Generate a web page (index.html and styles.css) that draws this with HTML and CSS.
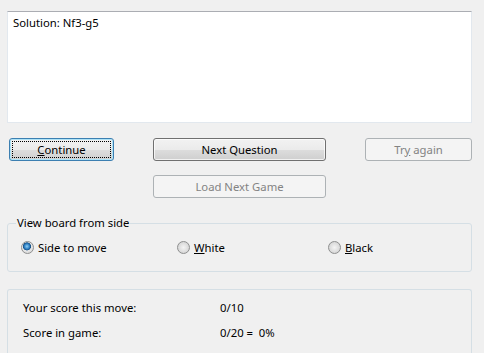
FILE: index.html
```html
<!DOCTYPE html>
<html>
<head>
    <link rel="stylesheet" href="styles.css">
</head>
<body>
    <div class="solution-box">Solution: Nf3-g5</div>

    <div class="buttons">
        <button class="btn default"><span class="focus"><u>C</u>ontinue</span></button>
        <button class="btn">Next Question</button>
        <button class="btn" disabled>Tr<u>y</u> again</button>
        <button class="btn load" disabled>Load Next Game</button>
    </div>

    <fieldset class="side-group">
        <legend>View board from side</legend>
        <div class="radios">
            <label class="radio"><input type="radio" name="side" checked> Side to move</label>
            <label class="radio"><input type="radio" name="side"> <span><u>W</u>hite</span></label>
            <label class="radio"><input type="radio" name="side"> <span><u>B</u>lack</span></label>
        </div>
    </fieldset>

    <div class="score-box">
        <div class="score-row">
            <span class="score-label">Your score this move:</span>
            <span>0/10</span>
        </div>
        <div class="score-row">
            <span class="score-label">Score in game:</span>
            <span>0/20 =&nbsp; 0%</span>
        </div>
    </div>
</body>
</html>
```

FILE: styles.css
```css
body {
    margin: 0;
    padding: 11px 12px 0 7px;
    background-color: #f0f0f0;
    font-family: 'Noto Sans', 'DejaVu Sans', sans-serif;
    font-size: 11.3px;
    color: #000;
    height: 353px;
    box-sizing: border-box;
    overflow: hidden;
}
.solution-box {
    height: 112px;
    box-sizing: border-box;
    background-color: #fff;
    border: 1px solid #e2e8ee;
    border-top-color: #abadb3;
    padding: 3px 5px;
    line-height: 16px;
}

/* Button grid */
.buttons {
    display: grid;
    grid-template-columns: 105px 172px 106px;
    grid-template-rows: 23px 23px;
    column-gap: 40px;
    row-gap: 14px;
    margin: 15px 0 0 2px;
}
.btn {
    font-family: inherit;
    font-size: 11.3px;
    color: #000;
    padding: 0;
    border: 1px solid #707070;
    border-radius: 3px;
    background: linear-gradient(#f2f2f2 0%, #ebebeb 50%, #dddddd 51%, #cfcfcf 100%);
    box-shadow: inset 0 0 0 1px rgba(255, 255, 255, 0.7);
}
.btn:nth-child(2) {
    margin-left: -1px;
    width: 173px;
}
.btn.default {
    border-color: #3c7fb1;
    box-shadow: inset 0 0 0 1px #aee3f7;
    padding: 2px;
}
.btn .focus {
    display: flex;
    align-items: center;
    justify-content: center;
    height: 100%;
    border: 1px dotted #000;
    box-sizing: border-box;
}
.btn:disabled {
    border-color: #adb2b5;
    background: #f4f4f4;
    color: #838383;
    box-shadow: none;
}
.btn:nth-child(3) {
    margin-left: -1px;
}
.btn.load {
    grid-column: 2;
    margin-left: -1px;
    width: 173px;
}

/* View board group */
.side-group {
    margin: 18px 0 0 0;
    padding: 0 0 0 13px;
    height: 56px;
    box-sizing: border-box;
    border: 1px solid #d5dfe5;
    border-radius: 3px;
}
.side-group legend {
    padding: 0 1px;
    margin-left: -5px;
    line-height: 14px;
}
.radios {
    display: grid;
    grid-template-columns: 156px 151px auto;
    margin-top: 9px;
}
.radio {
    display: flex;
    align-items: center;
    gap: 4px;
    height: 16px;
}
.radio input {
    appearance: none;
    margin: 0;
    width: 13px;
    height: 13px;
    border-radius: 50%;
    border: 1px solid #8e8f8f;
    background: radial-gradient(circle at 50% 50%, #f4f4f4 0%, #dcdcdc 60%, #c9c9c9 100%);
    box-sizing: border-box;
}
.radio input:checked {
    background: radial-gradient(circle at 45% 40%, #8fd0f5 0%, #2a7bc0 30%, #164f83 42%, #e8e8e8 48%, #d8d8d8 80%, #c4c4c4 100%);
}

/* Score panel */
.score-box {
    margin-top: 17px;
    height: 64px;
    box-sizing: border-box;
    border: 1px solid #d5dfe5;
    border-bottom: none;
    border-radius: 3px 3px 0 0;
    padding: 5px 0 0 15px;
}
.score-row {
    display: flex;
    height: 25px;
    align-items: center;
}
.score-label {
    width: 197px;
}
```
